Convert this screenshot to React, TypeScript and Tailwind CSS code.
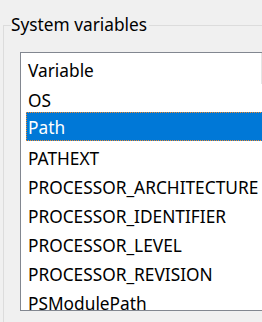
const rows = [
  'OS',
  'Path',
  'PATHEXT',
  'PROCESSOR_ARCHITECTURE',
  'PROCESSOR_IDENTIFIER',
  'PROCESSOR_LEVEL',
  'PROCESSOR_REVISION',
  'PSModulePath',
];

const App = () => {
  const selected = 'Path';

  return (
    <div className="w-[262px] h-[322px] overflow-hidden bg-[#f0f0f0] text-black text-[17.3px] font-['Noto_Sans',sans-serif]">
      <fieldset className="ml-[3px] mt-[13px] w-[320px] h-[400px] border border-[#dcdcdc] pl-[7px]">
        <legend className="px-0 pr-[2px] leading-[24px]">System variables</legend>

        {/* liste des variables */}
        <div className="ml-[9px] mt-[15px] w-[300px] h-[259px] overflow-hidden border border-[#828790] bg-white">
          <div className="w-[241px] h-[32px] -mt-px border-r border-[#e5e5e5] pl-[7px] pt-[4px] leading-[29px]">
            Variable
          </div>
          <div className="flex flex-col -mt-px">
            {rows.map((name) => (
              <div
                key={name}
                className={
                  name === selected
                    ? 'ml-[5px] h-[29px] pl-[1px] leading-[27px] pt-px border border-dotted border-[#f28a2b] bg-[#0078d7] text-white whitespace-nowrap'
                    : 'ml-[5px] h-[29px] pl-[2px] leading-[29px] pt-[3px] whitespace-nowrap'
                }
              >
                {name}
              </div>
            ))}
          </div>
        </div>
      </fieldset>
    </div>
  );
};

export default App;
